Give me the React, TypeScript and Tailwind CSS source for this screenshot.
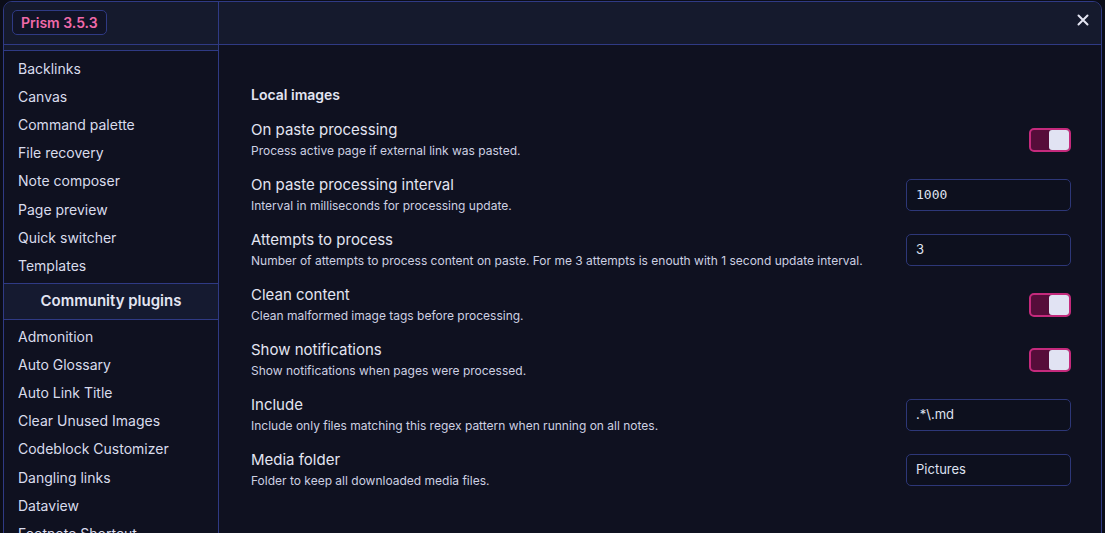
import React from "react";

const core = [
  "Backlinks",
  "Canvas",
  "Command palette",
  "File recovery",
  "Note composer",
  "Page preview",
  "Quick switcher",
  "Templates",
];
const community = [
  "Admonition",
  "Auto Glossary",
  "Auto Link Title",
  "Clear Unused Images",
  "Codeblock Customizer",
  "Dangling links",
  "Dataview",
  "Footnote Shortcut",
];

type Setting = {
  title: string;
  desc: string;
  control: { kind: "toggle" } | { kind: "input"; value: string; mono?: boolean };
};

const settings: Setting[] = [
  { title: "On paste processing", desc: "Process active page if external link was pasted.", control: { kind: "toggle" } },
  { title: "On paste processing interval", desc: "Interval in milliseconds for processing update.", control: { kind: "input", value: "1000", mono: true } },
  { title: "Attempts to process", desc: "Number of attempts to process content on paste. For me 3 attempts is enouth with 1 second update interval.", control: { kind: "input", value: "3" } },
  { title: "Clean content", desc: "Clean malformed image tags before processing.", control: { kind: "toggle" } },
  { title: "Show notifications", desc: "Show notifications when pages were processed.", control: { kind: "toggle" } },
  { title: "Include", desc: "Include only files matching this regex pattern when running on all notes.", control: { kind: "input", value: ".*\\.md" } },
  { title: "Media folder", desc: "Folder to keep all downloaded media files.", control: { kind: "input", value: "Pictures" } },
];

function Toggle() {
  return (
    <div className="w-[42px] h-[24px] rounded-[5px] border-2 border-[#c42a7c] bg-[#560d3a] flex items-center justify-end pr-[0px]">
      <div className="w-[20px] h-[20px] rounded-[3px] bg-[#e1e3f3]" />
    </div>
  );
}

function Input({ value, mono }: { value: string; mono?: boolean }) {
  return (
    <div
      className={
        "w-[165px] h-[32px] rounded-[5px] border border-[#2d3778] bg-[#0d101e] flex items-center px-[9px] text-[13px] text-[#dfe2f0] " +
        (mono ? "font-['DejaVu_Sans_Mono',monospace] text-[12.5px]" : "")
      }
    >
      {value}
    </div>
  );
}

export default function App() {
  return (
    <div className="w-[1105px] h-[533px] bg-[#0b0d18] pt-[1px] px-[3px] overflow-hidden font-['Inter',sans-serif]">
      <div className="h-[560px] border border-[#2f3a84] rounded-t-[9px] overflow-hidden flex bg-[#0f1120]">
        {/* Sidebar */}
        <div className="w-[215px] shrink-0 border-r border-[#2f3a84] flex flex-col bg-[#151a2d]">
          <div className="h-[43px] border-b border-[#2f3a84] flex items-center pl-[8px] pb-[1px]">
            <div className="h-[25px] px-[8px] rounded-[5px] border border-[#2f3a84] bg-[#111427] flex items-center text-[14px] font-semibold text-[#f06aa9]">
              Prism 3.5.3
            </div>
          </div>
          <div className="h-[5px]" />
          <div className="flex-1 border-t border-[#2f3a84] bg-[#0f1120]">
            <div className="pt-[3px] pb-[3px]">
              {core.map((c) => (
                <div key={c} className="pl-[14px] py-[3.6px] leading-[21px] text-[14px] text-[#d9dcec]">
                  {c}
                </div>
              ))}
            </div>
            <div className="h-[37px] border-y border-[#2f3a84] bg-[#151a30] flex items-center justify-center text-[15px] font-semibold text-[#e3e5f2]">
              Community plugins
            </div>
            <div className="pt-[3px]">
              {community.map((c) => (
                <div key={c} className="pl-[14px] py-[3.55px] leading-[21px] text-[14px] text-[#d9dcec]">
                  {c}
                </div>
              ))}
            </div>
          </div>
        </div>
        {/* Main */}
        <div className="flex-1 flex flex-col">
          <div className="h-[43px] border-b border-[#2f3a84] bg-[#151a2d] flex items-start justify-end pr-[12px] pt-[12px]">
            <svg width="12" height="12" viewBox="0 0 12 12" fill="none" stroke="#e3e5f2" strokeWidth="2" strokeLinecap="round">
              <path d="M1.5 1.5 L10.5 10.5 M10.5 1.5 L1.5 10.5" />
            </svg>
          </div>
          <div className="pl-[32px] pr-[30px] pt-[40px]">
            <div className="text-[14px] leading-[20px] font-semibold text-[#e3e5f2] mb-[7px]">Local images</div>
            {settings.map((s) => (
              <div key={s.title} className="flex items-center justify-between py-2">
                <div className="flex flex-col gap-[3px]">
                  <div className="text-[15px] leading-[20px] text-[#e3e5f2]">{s.title}</div>
                  <div className="text-[12px] leading-[16px] text-[#cdd0e2]">{s.desc}</div>
                </div>
                {s.control.kind === "toggle" ? (
                  <Toggle />
                ) : (
                  <Input value={s.control.value} mono={s.control.mono} />
                )}
              </div>
            ))}
          </div>
        </div>
      </div>
    </div>
  );
}
